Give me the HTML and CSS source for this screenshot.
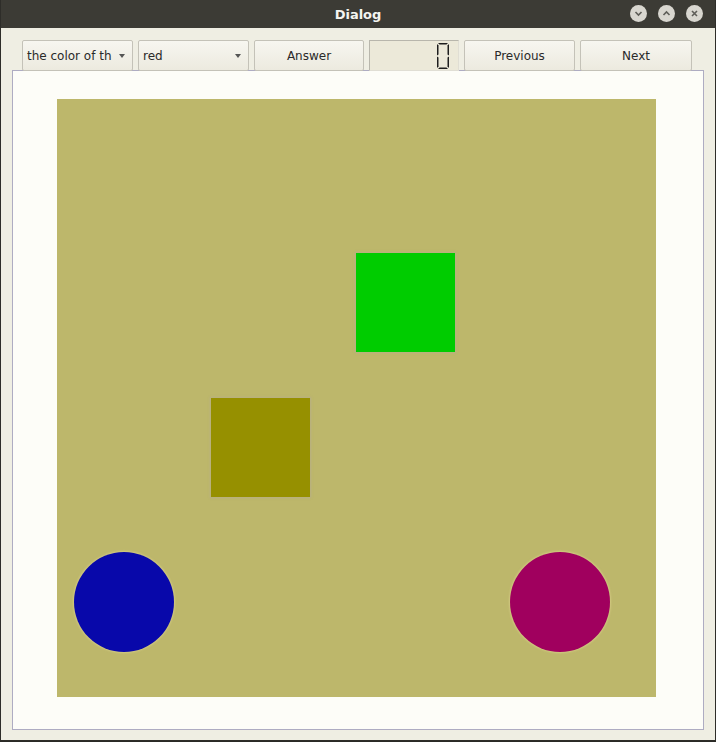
FILE: index.html
```html
<!DOCTYPE html>
<html>
<head>
<meta charset="utf-8">
<link rel="stylesheet" href="styles.css">
</head>
<body>
<div class="window">
  <div class="titlebar">
    <span class="title">Dialog</span>
    <div class="wbtns">
      <span class="wbtn"><svg width="9" height="9" viewBox="0 0 9 9"><path d="M1.5 3 L4.5 6 L7.5 3" fill="none" stroke="#5e5d58" stroke-width="1.6"/></svg></span>
      <span class="wbtn"><svg width="9" height="9" viewBox="0 0 9 9"><path d="M1.5 6 L4.5 3 L7.5 6" fill="none" stroke="#5e5d58" stroke-width="1.6"/></svg></span>
      <span class="wbtn"><svg width="9" height="9" viewBox="0 0 9 9"><path d="M2 2 L7 7 M7 2 L2 7" fill="none" stroke="#5e5d58" stroke-width="1.6"/></svg></span>
    </div>
  </div>
  <div class="toolbar">
    <div class="combo w111"><span class="ctext">the color of th</span><span class="arrow"></span></div>
    <div class="combo w111"><span class="ctext">red</span><span class="arrow"></span></div>
    <div class="btn w110">Answer</div>
    <div class="lcd">
      <svg width="14" height="28" viewBox="0 0 14 28">
        <g fill="#1e1e1e">
          <path d="M2 1 L12 1 L10.5 2.5 L3.5 2.5 Z"/>
          <path d="M2 27 L12 27 L10.5 25.5 L3.5 25.5 Z"/>
          <path d="M1 2 L2.5 3.5 L2.5 12.5 L1 13.5 Z"/>
          <path d="M13 2 L11.5 3.5 L11.5 12.5 L13 13.5 Z"/>
          <path d="M1 14.5 L2.5 15.5 L2.5 24.5 L1 26 Z"/>
          <path d="M13 14.5 L11.5 15.5 L11.5 24.5 L13 26 Z"/>
        </g>
      </svg>
    </div>
    <div class="btn w111">Previous</div>
    <div class="btn w112">Next</div>
  </div>
  <div class="panel">
    <div class="canvas">
      <div class="shape sq green"></div>
      <div class="shape sq olive"></div>
      <div class="shape circ blue"></div>
      <div class="shape circ magenta"></div>
    </div>
  </div>
</div>
</body>
</html>
```

FILE: styles.css
```css
html, body {
  margin: 0;
  padding: 0;
  background: #2a2a26;
}
.window {
  width: 714px;
  height: 740px;
  border: 1px solid #2e2d29;
  border-top: 0;
  background: #efeee3;
  display: flex;
  flex-direction: column;
  font-family: "DejaVu Sans", sans-serif;
  font-size: 12px;
  color: #2a2a2a;
}
.titlebar {
  height: 28px;
  background: #3c3b35;
  position: relative;
  display: flex;
  align-items: center;
  justify-content: center;
}
.title {
  color: #f4f4f0;
  font-weight: bold;
  font-size: 13px;
}
.wbtns {
  position: absolute;
  right: 12px;
  top: 5px;
  display: flex;
  gap: 11px;
}
.wbtn {
  width: 17px;
  height: 17px;
  border-radius: 50%;
  background: #d8d6cf;
  display: flex;
  align-items: center;
  justify-content: center;
}
.toolbar {
  display: flex;
  gap: 5px;
  padding: 12px 0 0 21px;
  height: 31px;
  position: relative;
  z-index: 1;
}
.combo, .btn {
  box-sizing: border-box;
  height: 31px;
  border: 1px solid #c4c2b8;
  border-radius: 2px;
  background: linear-gradient(#f7f6f0, #eceadf);
}
.w111 { width: 111px; }
.w110 { width: 110px; }
.w112 { width: 112px; }
.combo {
  display: flex;
  align-items: center;
  justify-content: space-between;
  padding: 0 7px 0 4px;
}
.arrow {
  width: 0;
  height: 0;
  border-left: 3.5px solid transparent;
  border-right: 3.5px solid transparent;
  border-top: 4px solid #555;
}
.btn {
  display: flex;
  align-items: center;
  justify-content: center;
}
.lcd {
  box-sizing: border-box;
  width: 90px;
  height: 31px;
  border: 1px solid #b8b6ac;
  border-right-color: #e0ded4;
  border-bottom-color: #e0ded4;
  background: #ece9d9;
  display: flex;
  align-items: center;
  justify-content: flex-end;
  padding-right: 8px;
}
.panel {
  box-sizing: border-box;
  margin: -1px 11px 0 11px;
  height: 660px;
  border: 1px solid #aeacc2;
  background: #fdfdf8;
  padding: 28px 0 0 44px;
}
.canvas {
  position: relative;
  width: 599px;
  height: 598px;
  background: #bdb76b;
}
.shape {
  position: absolute;
}
.sq {
  width: 99px;
  height: 99px;
  box-shadow: 0 0 2px 1px rgba(180,170,150,0.6);
}
.green {
  left: 299px;
  top: 154px;
  background: #00cc00;
}
.olive {
  left: 154px;
  top: 299px;
  background: #969000;
}
.circ {
  width: 100px;
  height: 100px;
  border-radius: 50%;
  top: 453px;
  box-shadow: 0 0 2px 1px rgba(220,210,140,0.7);
}
.blue {
  left: 17px;
  background: #0808aa;
}
.magenta {
  left: 453px;
  background: #a0005e;
}
```
